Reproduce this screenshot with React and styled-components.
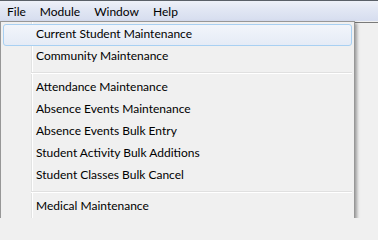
import React from 'react'
import styled, { createGlobalStyle } from 'styled-components'

const GlobalStyle = createGlobalStyle`
  html, body {
    margin: 0;
    padding: 0;
    background: #f0f0f0;
  }
  body {
    font-family: Lato, "Liberation Sans", sans-serif;
    font-size: 12px;
    color: #000;
  }
`

const sections = [
  ['Current Student Maintenance', 'Community Maintenance'],
  [
    'Attendance Maintenance',
    'Absence Events Maintenance',
    'Absence Events Bulk Entry',
    'Student Activity Bulk Additions',
    'Student Classes Bulk Cancel'
  ],
  ['Medical Maintenance']
]

const topMenus = ['File', 'Module', 'Window', 'Help']

export default function App() {
  return (
    <>
      <GlobalStyle />
      <Frame>
        <MenuBar>
          {topMenus.map(m => (
            <TopItem key={m}>{m}</TopItem>
          ))}
        </MenuBar>
        <Workspace />
        <Popup>
          {sections.map((group, i) => (
            <React.Fragment key={i}>
              {i > 0 && <Separator />}
              {group.map(label => (
                <Item key={label} $hot={label === 'Current Student Maintenance'}>
                  {label}
                </Item>
              ))}
            </React.Fragment>
          ))}
        </Popup>
      </Frame>
    </>
  )
}

// STYLES
const Frame = styled.div`
  position: relative;
  width: 378px;
  height: 218px;
  overflow: hidden;
  display: flex;
  flex-direction: column;
`

const MenuBar = styled.div`
  height: 20px;
  border-top: 1px solid #5a6068;
  background: linear-gradient(to bottom, #eef1f8 0%, #e3e8f4 35%, #d6ddef 100%);
  display: flex;
  align-items: center;
`

const TopItem = styled.div`
  padding: 0 7px;
  line-height: 19px;
`

const Workspace = styled.div`
  flex: 1;
  margin-top: 1px;
  border-top: 1px solid #7a7a7a;
  background: #f0f0f0;
`

// dropdown sits over the workspace
const Popup = styled.div`
  position: absolute;
  left: 0;
  top: 21px;
  width: 349px;
  padding: 2px;
  border: 1px solid #979797;
  background:
    linear-gradient(to right, transparent 30px, #e2e3e3 30px, #e2e3e3 31px, #ffffff 31px, #ffffff 32px, transparent 32px),
    #f0f0f0;
  box-shadow: 2px 2px 3px rgba(0, 0, 0, 0.35);
`

const Item = styled.div`
  box-sizing: border-box;
  height: 22px;
  line-height: 18px;
  padding: 0 0 2px 32px;
  border: 1px solid ${p => (p.$hot ? '#a8d0f2' : 'transparent')};
  border-radius: 3px;
  background: ${p => (p.$hot ? 'linear-gradient(to bottom, #f2f5fb, #e5ebf6)' : 'transparent')};
  white-space: nowrap;
`

const Separator = styled.div`
  height: 9px;
  margin-left: 28px;
  background: linear-gradient(to bottom, transparent 4px, #e0e0e0 4px, #e0e0e0 5px, #ffffff 5px, #ffffff 6px, transparent 6px);
`
